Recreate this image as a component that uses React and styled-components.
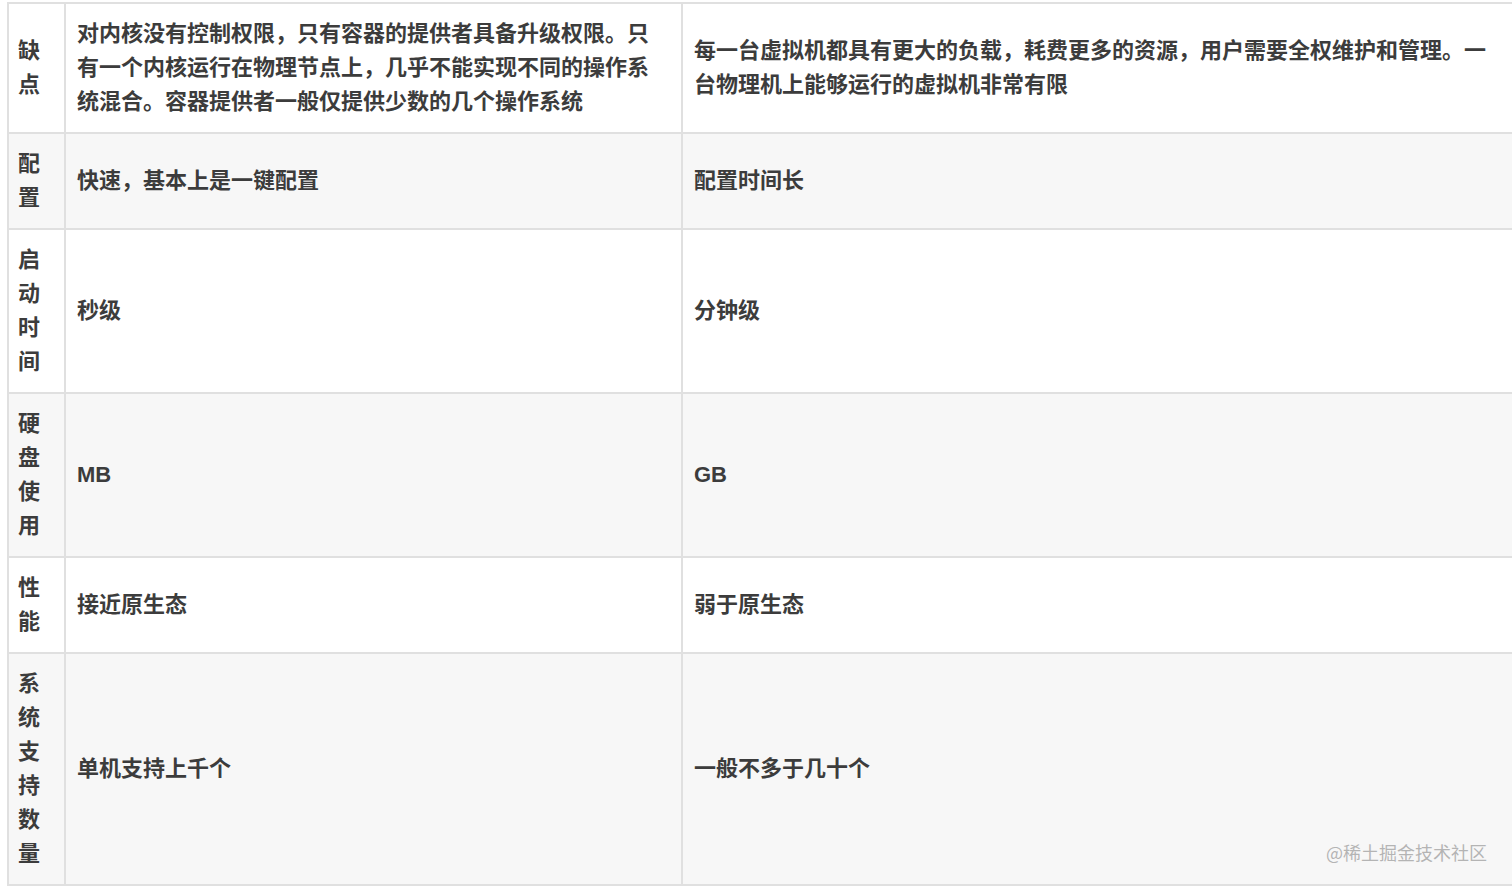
import React from "react";
import styled, { createGlobalStyle } from "styled-components";

const GlobalStyle = createGlobalStyle`
  html, body {
    margin: 0;
    padding: 0;
    background: #ffffff;
    overflow: hidden;
  }
  body {
    font-family: "Liberation Sans", "Noto Sans CJK SC", sans-serif;
  }
`;

const Page = styled.div`
  position: relative;
  width: 1512px;
  height: 888px;
  padding: 2px 0 0 7px;
  box-sizing: border-box;
  overflow: hidden;
`;

const Table = styled.table`
  border-collapse: collapse;
  table-layout: fixed;
  width: 1505px;
  color: #3c3c3c;
  font-size: 22px;
  font-weight: 600;
  line-height: 34px;
`;

const Row = styled.tr`
  background: ${(p) => (p.$shaded ? "#f7f7f7" : "#ffffff")};
`;

const Cell = styled.td`
  border: 2px solid #e0e0e0;
  padding: 13px 13px 13px 11px;
  vertical-align: middle;
  text-align: left;
  word-break: break-all;
`;

const LabelCell = styled(Cell)`
  padding: 13px 12px 13px 9px;
`;

const Watermark = styled.div`
  position: absolute;
  right: 25px;
  bottom: 25px;
  font-family: "Noto Sans CJK SC", sans-serif;
  font-size: 18px;
  line-height: 22px;
  font-weight: 400;
  color: #b4b4b4;
  text-shadow: 0 0 1px rgba(255, 255, 255, 0.8);
`;

const rows = [
  {
    label: "缺点",
    a: "对内核没有控制权限，只有容器的提供者具备升级权限。只有一个内核运行在物理节点上，几乎不能实现不同的操作系统混合。容器提供者一般仅提供少数的几个操作系统",
    b: "每一台虚拟机都具有更大的负载，耗费更多的资源，用户需要全权维护和管理。一台物理机上能够运行的虚拟机非常有限",
  },
  { label: "配置", a: "快速，基本上是一键配置", b: "配置时间长" },
  { label: "启动时间", a: "秒级", b: "分钟级" },
  { label: "硬盘使用", a: "MB", b: "GB" },
  { label: "性能", a: "接近原生态", b: "弱于原生态" },
  { label: "系统支持数量", a: "单机支持上千个", b: "一般不多于几十个" },
];

export default function App() {
  return (
    <>
      <GlobalStyle />
      <Page>
        <Table>
          <colgroup>
            <col style={{ width: 57 }} />
            <col style={{ width: 617 }} />
            <col style={{ width: 831 }} />
          </colgroup>
          <tbody>
            {rows.map((r, i) => (
              <Row key={r.label} $shaded={i % 2 === 1}>
                <LabelCell>{r.label}</LabelCell>
                <Cell>{r.a}</Cell>
                <Cell>{r.b}</Cell>
              </Row>
            ))}
          </tbody>
        </Table>
        <Watermark>@稀土掘金技术社区</Watermark>
      </Page>
    </>
  );
}
